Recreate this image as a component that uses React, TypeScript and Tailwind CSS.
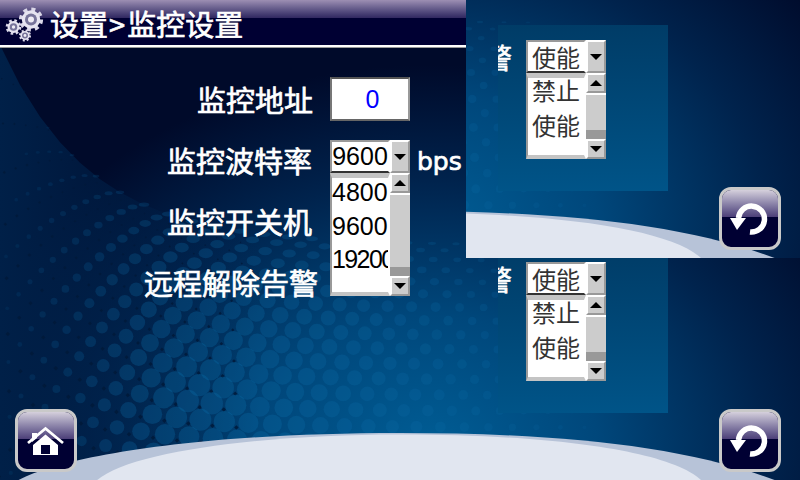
import React from "react";

const cjk = "font-['Noto_Sans_CJK_SC','Liberation_Sans',sans-serif]";
const digits = "font-['Liberation_Sans',sans-serif]";
const latin = "font-['DejaVu_Sans',sans-serif]";
const fakeBold = "[-webkit-text-stroke:0.7px_white]";

const boundary = (x: number) => 245 - 200 * Math.exp(-x / 90);
const clamp = (v: number, a = 0, b = 1) => Math.min(b, Math.max(a, v));

function makeDots() {
  const dots: { x: number; y: number; rx: number; ry: number; o: number }[] = [];
  const diamonds: { x: number; y: number; s: number }[] = [];
  const N = 20;
  for (let r = 0; r <= N; r++) {
    const t = r / N;
    for (let c = -2; c < 28; c++) {
      const x = c * 24 + (r % 2 ? 12 : 0) + t * 12;
      const b = boundary(x);
      const y = b + (530 - b) * Math.pow(t, 1.25);
      const dist = Math.hypot((x - 200) / 400, (y - 400) / 340);
      const left = clamp((x + 10) / 170);
      const size = clamp(1 - dist) * left;
      if (size > 0.03) {
        const rx = 1.5 + 10 * size;
        dots.push({
          x,
          y,
          rx,
          ry: rx * (0.42 + 0.58 * clamp(t * 3.2)),
          o: 0.1 + 0.55 * Math.sqrt(size),
        });
      }
      if (x < 230 && y > b + 6) {
        const s = 1 + 2.2 * clamp(t * 1.5);
        diamonds.push({ x: x + 12, y: y + (530 - b) * 0.02, s });
      }
    }
  }
  return { dots, diamonds };
}
const { dots, diamonds } = makeDots();

const bandPath = (() => {
  let d = "M 0 45";
  for (let x = 0; x <= 480; x += 20) d += ` L ${x} ${boundary(x).toFixed(1)}`;
  return d + " L 480 480 L 0 480 Z";
})();

function Background({ id, viewBox }: { id: string; viewBox: string }) {
  return (
    <svg
      className="absolute inset-0 w-full h-full"
      viewBox={viewBox}
      preserveAspectRatio="none"
      aria-hidden="true"
    >
      <defs>
        <radialGradient
          id={`${id}r`}
          gradientUnits="userSpaceOnUse"
          cx="0"
          cy="0"
          r="1"
          gradientTransform="translate(430 450) scale(480 385)"
        >
          <stop offset="0" stopColor="#005d95" />
          <stop offset="0.35" stopColor="#00477b" />
          <stop offset="0.7" stopColor="#00234d" />
          <stop offset="1" stopColor="#000a2a" />
        </radialGradient>
        <linearGradient id={`${id}b`} gradientUnits="userSpaceOnUse" x1="0" y1="0" x2="260" y2="0">
          <stop offset="0" stopColor="#002048" stopOpacity="1" />
          <stop offset="1" stopColor="#002048" stopOpacity="0" />
        </linearGradient>
      </defs>
      <rect x="0" y="0" width="800" height="480" fill={`url(#${id}r)`} />
      <path d={bandPath} fill={`url(#${id}b)`} />
      {diamonds.map((d, i) => (
        <rect
          key={i}
          x={d.x - d.s / 2}
          y={d.y - d.s / 2}
          width={d.s}
          height={d.s}
          fill="#001a3a"
          opacity="0.85"
          transform={`rotate(45 ${d.x} ${d.y})`}
        />
      ))}
      {dots.map((d, i) => (
        <ellipse key={i} cx={d.x} cy={d.y} rx={d.rx} ry={d.ry} fill="#0a6aa5" opacity={d.o * 0.55} />
      ))}
      <path d="M 15 482 C 60 456 200 433 400 433 C 560 433 690 446 785 484 Z" fill="#b7c3d8" />
      <path d="M 95 482 C 125 452 260 434.5 400 434.5 C 560 434.5 675 452 703 482 Z" fill="#e1e6f0" />
    </svg>
  );
}

function Arrow({ up = false }: { up?: boolean }) {
  return (
    <svg width="12" height="6" viewBox="0 0 12 6" aria-hidden="true">
      <path d={up ? "M0 6 L6 0 L12 6 Z" : "M0 0 L12 0 L6 6 Z"} fill="#000" />
    </svg>
  );
}

function Bevel({ className, up }: { className: string; up?: boolean }) {
  return (
    <div
      className={`w-[20px] shrink-0 flex items-center justify-center bg-[#cccccc] border-2 border-t-white border-l-white border-r-[#999999] border-b-[#999999] ${className}`}
    >
      <Arrow up={up} />
    </div>
  );
}

function SelectBox({
  value,
  options,
  textClass,
  rowClass,
  listClass,
  offsetClass,
}: {
  value: string;
  options: string[];
  textClass: string;
  rowClass: string;
  listClass: string;
  offsetClass: string;
}) {
  return (
    <div className="w-[80px] flex flex-col shrink-0">
      <div className="flex h-[33px]">
        <div className="w-[60px] bg-white border-2 border-t-[#999999] border-l-[#999999] border-r-white border-b-[#333333] overflow-hidden flex items-center justify-center">
          <span className={`${textClass} whitespace-nowrap`}>{value}</span>
        </div>
        <Bevel className="h-[33px]" />
      </div>
      <div className={`flex ${listClass}`}>
        <div className="w-[60px] bg-white border-t-[5px] border-t-[#c4c4c4] border-l-2 border-l-[#999999] border-r-2 border-r-white border-b-[4px] border-b-[#c4c4c4] overflow-hidden flex flex-col">
          <div className={`${offsetClass} flex flex-col`}>
            {options.map((o) => (
              <div
                key={o}
                className={`${rowClass} ${textClass} ${o.length > 4 ? "tracking-[-1.6px]" : ""} whitespace-nowrap flex items-center shrink-0`}
              >
                {o}
              </div>
            ))}
          </div>
        </div>
        <div className="w-[20px] flex flex-col bg-[#999999]">
          <Bevel className="h-[20px]" up />
          <div className="flex-1 bg-[#cccccc] border-t-2 border-t-white" />
          <div className="h-[9px] bg-[#999999]" />
          <Bevel className="h-[20px]" />
        </div>
      </div>
    </div>
  );
}

function AlarmPanel() {
  return (
    <div className="w-[170px] h-[166px] flex items-start pt-[15px] bg-linear-to-b from-[#003c67] to-[#005488]">
      <div className="w-[14px] h-[33px] mr-[14px] overflow-hidden flex items-center justify-end">
        <span className={`${cjk} ${fakeBold} text-[28px] leading-none text-white shrink-0 w-[28px]`}>警</span>
      </div>
      <SelectBox
        value="使能"
        options={["禁止", "使能"]}
        textClass={`${cjk} text-[24px] text-[#333333]`}
        rowClass="h-[35px] pl-[4px]"
        listClass="h-[86px]"
        offsetClass="-mt-[6px]"
      />
    </div>
  );
}

function GlossButton({ children, className }: { children: React.ReactNode; className: string }) {
  return (
    <div
      className={`w-[62px] h-[63px] rounded-[12px] border-[3px] border-[#c9c9c9] overflow-hidden flex flex-col relative bg-[#000033] shrink-0 ${className}`}
    >
      <div className="h-[27px] bg-linear-to-b from-[#d5d0dc] to-[#4c3f78]" />
      <svg className="absolute inset-0" width="56" height="57" viewBox="3 3 56 57" aria-hidden="true">
        {children}
      </svg>
    </div>
  );
}

function ReturnButton({ className }: { className: string }) {
  return (
    <GlossButton className={className}>
      <path d="M19.5 31 A 13 13 0 1 1 31 45" fill="none" stroke="#fff" strokeWidth="5.5" />
      <path d="M11 31 L27 31 L18 43 Z" fill="#fff" />
    </GlossButton>
  );
}

function HomeButton({ className }: { className: string }) {
  return (
    <GlossButton className={className}>
      <path d="M17 24 H22 V29 L17 33 Z" fill="#fff" />
      <path d="M13 34 L30.5 19.5 L48 34" fill="none" stroke="#fff" strokeWidth="2.8" />
      <path fillRule="evenodd" d="M18 36 L30.5 25.5 L43 36 V46 H18 Z M26 36 V45 H35 V36 Z" fill="#fff" />
    </GlossButton>
  );
}

function Gear({ x, y, r, ring, hole }: { x: number; y: number; r: number; ring: number; hole: number }) {
  const c = 2 * Math.PI * r;
  const teeth = 8;
  const dash = c / teeth / 2;
  return (
    <g>
      <circle cx={x} cy={y} r={r} fill="none" stroke="#dad7e8" strokeWidth={r * 0.42} strokeDasharray={`${dash} ${dash}`} />
      <circle cx={x} cy={y} r={r * 0.92} fill="#e6e4f0" />
      <circle cx={x} cy={y} r={ring} fill="#77749a" />
      <circle cx={x} cy={y} r={hole} fill="#eeecf4" />
    </g>
  );
}

function Header() {
  return (
    <div className="h-[48px] shrink-0 relative flex flex-col bg-[#000033]">
      <div className="h-[18px] bg-linear-to-b from-[#9d8fb3] to-[#302760]" />
      <div className="flex-1" />
      <div className="h-[2px] bg-white" />
      <div className="h-[1px] bg-[#999999]" />
      <div className="absolute inset-0 flex items-center pl-[4px] pb-[2px]">
        <svg width="44" height="44" viewBox="0 0 44 44" aria-hidden="true" className="shrink-0">
          <Gear x={27} y={18.5} r={10} ring={6} hole={3} />
          <Gear x={9.5} y={26} r={6.5} ring={3.8} hole={1.7} />
          <Gear x={21} y={34.5} r={5} ring={3} hole={1.4} />
        </svg>
        <span className={`${cjk} ${fakeBold} ml-[2px] text-[29px] leading-none text-white whitespace-nowrap`}>
          设置<span className="ml-[1px] mr-[2px]">&gt;</span>监控设置
        </span>
      </div>
    </div>
  );
}

function Label({ text, className }: { text: string; className: string }) {
  return (
    <div className={`h-[61px] flex items-center justify-end ${className}`}>
      <span className={`${cjk} ${fakeBold} text-[29px] leading-none text-white whitespace-nowrap`}>{text}</span>
    </div>
  );
}

export default function App() {
  return (
    <div className="relative w-[800px] h-[480px] overflow-hidden bg-[#000a2a] flex flex-col">
      <Background id="main" viewBox="0 0 800 480" />
      <Header />
      <div className="relative flex-1 flex">
        <div className="w-[466px] flex flex-col">
          <div className="flex">
            <div className="w-[318px] pt-[21px] flex flex-col">
              <Label text="监控地址" className="pr-[5px]" />
              <Label text="监控波特率" className="pr-[6px]" />
              <Label text="监控开关机" className="pr-[6px]" />
              <Label text="远程解除告警" />
            </div>
            <div className="ml-[12px] pt-[29px] flex flex-col">
              <div className="w-[80px] h-[44px] bg-white border-2 border-t-[#555555] border-l-[#777777] border-r-[#999999] border-b-[#666666] flex items-center justify-center pl-[5px]">
                <span className={`${digits} text-[25px] leading-none text-[#0000ff]`}>0</span>
              </div>
              <div className="mt-[19px] flex items-start">
                <SelectBox
                  value="9600"
                  options={["4800", "9600", "19200"]}
                  textClass={`${digits} text-[25px] text-black`}
                  rowClass="h-[33.5px] pl-[0px]"
                  listClass="h-[123px]"
                  offsetClass="-mt-[2px]"
                />
                <span className={`${latin} ${fakeBold} ml-[7px] mt-[5px] text-[25px] leading-[33px] text-white`}>bps</span>
              </div>
            </div>
          </div>
          <HomeButton className="mt-auto ml-[15px] mb-[8px]" />
        </div>
        <div className="w-[334px] flex flex-col pt-[199px] pl-[32px]">
          <AlarmPanel />
          <ReturnButton className="self-end mr-[19px] -mt-[4px]" />
        </div>
      </div>
      <div className="absolute left-[466px] top-0 w-[334px] h-[258px] overflow-hidden flex flex-col pt-[25px] pl-[32px]">
        <Background id="win" viewBox="466 222 334 258" />
        <div className="relative">
          <AlarmPanel />
        </div>
        <ReturnButton className="self-end mr-[19px] -mt-[4px] relative" />
      </div>
    </div>
  );
}
